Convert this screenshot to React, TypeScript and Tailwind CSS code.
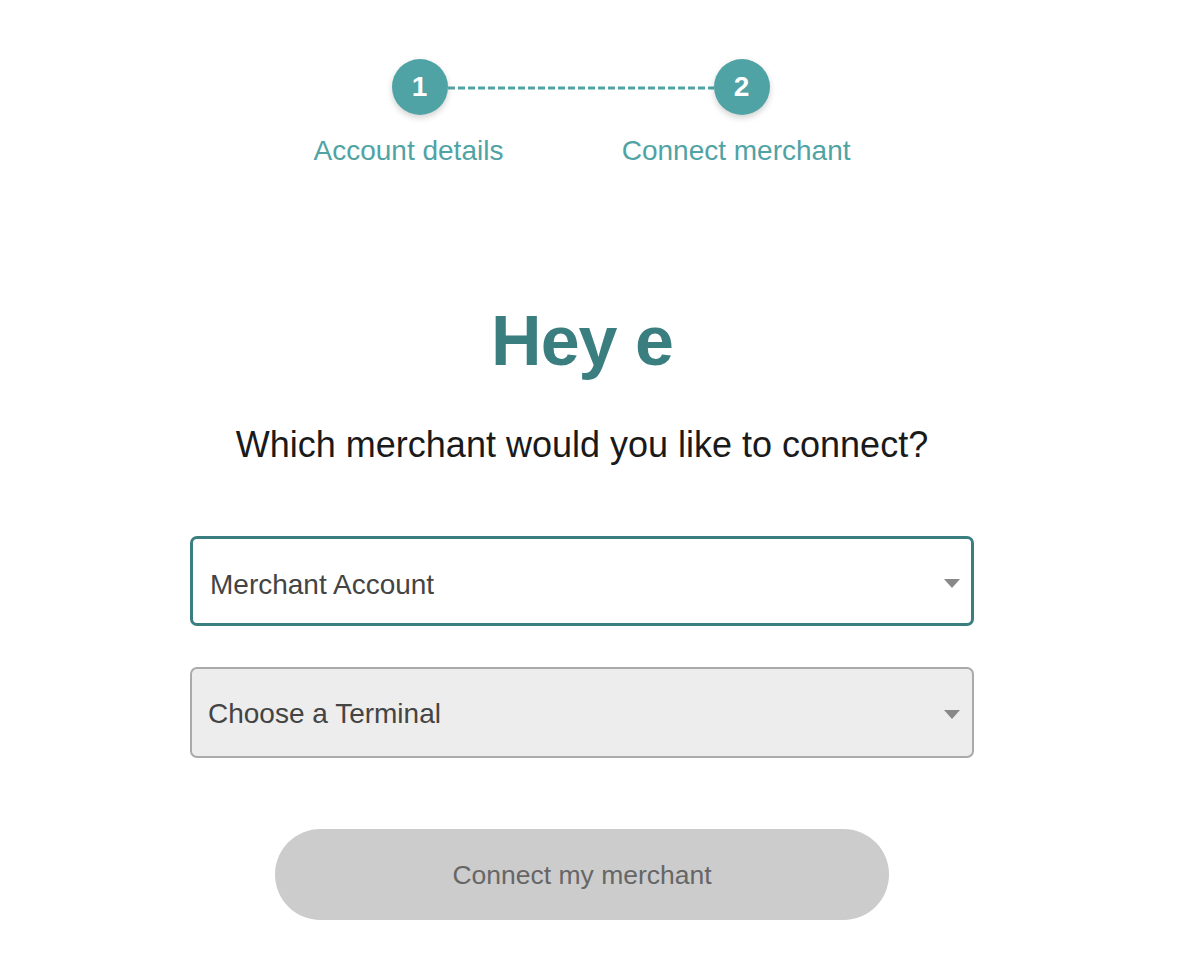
import React from "react";

const Caret = () => (
    <svg width="16" height="9" viewBox="0 0 16 9" className="shrink-0">
        <path d="M0 0H16L8 9Z" fill="#888888" />
    </svg>
);

const StepCircle = ({ n }: { n: number }) => (
    <div className="w-[56px] h-[56px] rounded-full bg-[#50a3a5] shadow-[0_3px_6px_rgba(0,0,0,0.18)] flex items-center justify-center text-white font-bold text-[28px] leading-none shrink-0">
        {n}
    </div>
);

export default function App() {
    return (
        <div className="w-[1164px] min-h-[958px] bg-white flex flex-col items-center font-['Liberation_Sans',Arial,sans-serif]">
            {/* steps */}
            <div className="w-[537px] pt-[59px] flex flex-col">
                <div className="flex items-center pl-[78px]">
                    <StepCircle n={1} />
                    <svg width="266" height="4" className="block mt-[1px]">
                        <line x1="0" y1="2" x2="266" y2="2" stroke="#50a3a5" strokeWidth="3" strokeDasharray="7 3" />
                    </svg>
                    <StepCircle n={2} />
                </div>
                <div className="flex justify-between mt-[20px] text-[28px] leading-[32px] text-[#50a3a5]">
                    <span>Account details</span>
                    <span>Connect merchant</span>
                </div>
            </div>

            <h1 className="mt-[139px] text-[70px] leading-none font-bold text-[#3b7e80] tracking-[-1px]">Hey e</h1>
            <p className="mt-[51px] text-[36px] leading-none text-[#1a1a1a]">Which merchant would you like to connect?</p>

            {/* selects */}
            <div className="mt-[73px] w-[784px] h-[90px] border-[3px] border-[#3b7e80] rounded-[7px] bg-white flex items-center justify-between pl-[17px] pr-[11px] pt-[5px]">
                <span className="text-[28px] text-[#444444] pt-[2px]">Merchant Account</span>
                <Caret />
            </div>
            <div className="mt-[41px] w-[784px] h-[91px] border-2 border-[#aaaaaa] rounded-[7px] bg-[#ededed] flex items-center justify-between pl-[16px] pr-[12px] pt-[3px]">
                <span className="text-[28px] text-[#444444]">Choose a Terminal</span>
                <Caret />
            </div>

            <button className="mt-[71px] w-[614px] h-[91px] rounded-full bg-[#cccccc] text-[26.5px] text-[#666666] pt-[2px]">
                Connect my merchant
            </button>
        </div>
    );
}
